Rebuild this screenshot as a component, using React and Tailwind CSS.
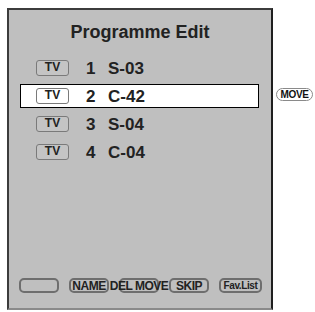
const rows = [
  { num: '1', name: 'S-03' },
  { num: '2', name: 'C-42', active: true },
  { num: '3', name: 'S-04' },
  { num: '4', name: 'C-04' },
];

const buttons = [
  { label: '', w: 'w-[40px]' },
  { label: 'NAME', w: 'w-[40px]' },
  { label: 'DEL MOVE', w: 'w-[40px]' },
  { label: 'SKIP', w: 'w-[40px]' },
  { label: 'Fav.List', w: 'w-[43px]', small: true },
];

function TvBadge({ active }) {
  return (
    <div
      className={`flex h-[16px] w-[33px] items-start justify-center rounded-[3px] border-[1.5px] border-[#7a7a7a] text-[12px] font-bold leading-[12px] text-[#222] ${
        active ? 'bg-white' : 'bg-[#c4c4c4]'
      }`}
    >
      TV
    </div>
  );
}

export default function App() {
  return (
    <div className="flex h-[312px] w-[315px] items-start bg-white font-['Liberation_Sans',Arial,sans-serif] text-[#222]">
      {/* main panel */}
      <div className="ml-[7px] mt-[8px] flex h-[302px] w-[266px] flex-col border-2 border-r-[#1f1f1f] border-l-[#3c3c3c] border-t-[#3c3c3c] border-b-[#8a8a8a] bg-[#bfbfbf]">
        <h1 className="mt-[11px] text-center text-[18px] font-bold leading-[22px]">Programme Edit</h1>

        <div className="mt-[13px] flex flex-col gap-[4px]">
          {rows.map((r) => (
            <div
              key={r.num}
              className={`ml-[11px] flex h-[24px] w-[239px] items-center pl-[15px] ${
                r.active ? 'border border-black bg-white' : 'border border-transparent'
              }`}
            >
              <TvBadge active={r.active} />
              <span className="ml-[17px] w-[22px] text-[17px] font-bold leading-none">{r.num}</span>
              <span className="text-[17px] font-bold leading-none">{r.name}</span>
            </div>
          ))}
        </div>

        <div className="mb-[15px] ml-[10px] mt-auto flex gap-[10px]">
          {buttons.map((b, i) => (
            <div
              key={i}
              className={`flex h-[15px] ${b.w} items-center justify-center whitespace-nowrap rounded-[5px] border-2 border-[#6e6e6e] font-bold leading-none ${
                b.small ? 'text-[10px] tracking-[-0.4px]' : 'text-[12px] tracking-[-0.5px]'
              }`}
            >
              {b.label}
            </div>
          ))}
        </div>
      </div>

      {/* side hint */}
      <div className="ml-[3px] mt-[88px] flex h-[13px] w-[37px] items-center justify-center rounded-full border border-[#8a8a8a] bg-white text-[10px] font-bold leading-none tracking-[-0.3px] text-[#111]">
        MOVE
      </div>
    </div>
  );
}
